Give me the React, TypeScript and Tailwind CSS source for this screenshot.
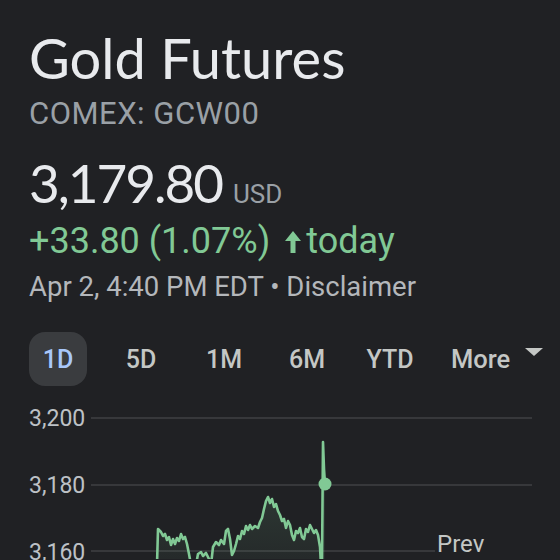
import React from "react";

const pts: [number, number][] = [
  [157, 566], [158, 530], [161, 533], [163, 537], [165, 535], [167, 541], [169, 538], [171, 546], [173, 540], [175, 545],
  [177, 539], [179, 542], [181, 535], [183, 540], [185, 538], [187, 545], [189, 555], [191, 566], [196, 566], [198, 555],
  [201, 553], [203, 557], [206, 554], [209, 560], [211, 566], [213, 548], [216, 543], [219, 546], [221, 541], [224, 545],
  [226, 532], [228, 530], [230, 540], [232, 556], [234, 552], [236, 545], [238, 537], [240, 540], [242, 532], [244, 535],
  [246, 527], [248, 531], [250, 526], [252, 530], [255, 527], [258, 529], [260, 523], [262, 519], [264, 510], [266, 502],
  [268, 498], [270, 504], [272, 500], [274, 508], [276, 505], [278, 512], [280, 516], [282, 522], [284, 520], [286, 529],
  [288, 522], [290, 526], [292, 536], [294, 541], [296, 532], [298, 534], [300, 529], [302, 538], [304, 540], [306, 530],
  [308, 533], [310, 526], [312, 530], [314, 534], [316, 531], [318, 536], [320, 548], [321, 566], [322, 566], [323, 443],
  [324, 470], [325, 485],
];

const OX = 88;
const OY = 400;
const linePath = pts.map(([x, y], i) => `${i === 0 ? "M" : "L"}${x - OX} ${y - OY}`).join(" ");
const fillPath = `${linePath} L${325 - OX} 170 L${157 - OX} 170 Z`;

function Tab({ label, active }: { label: string; active?: boolean }) {
  return (
    <div
      className={
        active
          ? "h-[54px] w-[58px] rounded-[16px] bg-[#3a3c3f] flex items-center justify-center text-[#a8c7fa]"
          : "h-[54px] w-[58px] rounded-[16px] flex items-center justify-center text-[#c4c7c5]"
      }
    >
      <span className="text-[25px] leading-[25px] font-medium">{label}</span>
    </div>
  );
}

export default function App() {
  return (
    <div className="w-[560px] h-[560px] overflow-hidden bg-[#202124] font-['Roboto',sans-serif]">
      <div className="pl-[29px] pt-[30px]">
        <div className="font-['Lato',sans-serif] text-[56px] leading-[56px] text-[#e8eaed]">Gold Futures</div>
        <div className="mt-[12px] text-[31px] leading-[31px] tracking-[0.5px] text-[#9aa0a6]">COMEX: GCW00</div>
        <div className="mt-[27px] flex items-baseline">
          <span className="font-['Lato',sans-serif] text-[53px] leading-[53px] tracking-[-2px] text-[#e8eaed]">3,179.80</span>
          <span className="ml-[11px] text-[26px] leading-[26px] text-[#9aa0a6]">USD</span>
        </div>
        <div className="mt-[14px] flex items-center text-[36px] leading-[36px] text-[#81c995]">
          <span>+33.80 (1.07%)</span>
          <svg width="16" height="22" viewBox="0 0 16 22" className="ml-[15px] mr-[5px] mt-[2px]">
            <polygon points="8,0 16,10 10.5,10 10.5,22 5.5,22 5.5,10 0,10" fill="#81c995" />
          </svg>
          <span>today</span>
        </div>
        <div className="mt-[14px] text-[27.5px] leading-[28px] text-[#b4b7bb]">Apr 2, 4:40 PM EDT • Disclaimer</div>
        <div className="mt-[31px] flex items-center gap-[25px]">
          <Tab label="1D" active />
          <Tab label="5D" />
          <Tab label="1M" />
          <Tab label="6M" />
          <Tab label="YTD" />
          <div className="flex items-center">
            <span className="pl-[7px] text-[25.5px] leading-[25px] font-medium text-[#c4c7c5]">More</span>
            <svg width="18" height="8" viewBox="0 0 18 8" className="ml-[15px] mb-[14px]">
              <polygon points="0,0 18,0 9,8" fill="#c4c7c5" />
            </svg>
          </div>
        </div>
        <div className="relative mt-[13px] flex h-[160px]">
          <div className="w-[59px] pt-[8px] flex flex-col gap-[44px] text-[23px] leading-[23px] text-[#bdc1c6]">
            <span>3,200</span>
            <span>3,180</span>
            <span>3,160</span>
          </div>
          <svg width="472" height="160" viewBox="0 0 472 160" className="shrink-0">
            <defs>
              <linearGradient id="g" x1="0" y1="0" x2="0" y2="1">
                <stop offset="0" stopColor="#81c995" stopOpacity="0.2" />
                <stop offset="1" stopColor="#81c995" stopOpacity="0.04" />
              </linearGradient>
            </defs>
            <line x1="3" y1="19" x2="444" y2="19" stroke="#3f4043" strokeWidth="1.5" />
            <line x1="3" y1="86" x2="444" y2="86" stroke="#3f4043" strokeWidth="1.5" />
            <line x1="3" y1="152" x2="347" y2="152" stroke="#3f4043" strokeWidth="1.5" />
            <path d={fillPath} fill="url(#g)" />
            <path d={linePath} fill="none" stroke="#81c995" strokeWidth="2.6" strokeLinejoin="round" />
            <circle cx={325 - OX} cy={85} r="6.5" fill="#81c995" />
          </svg>
          <span className="absolute left-[408px] top-[133px] text-[24px] leading-[24px] text-[#c4c7c5]">Prev</span>
        </div>
      </div>
    </div>
  );
}
